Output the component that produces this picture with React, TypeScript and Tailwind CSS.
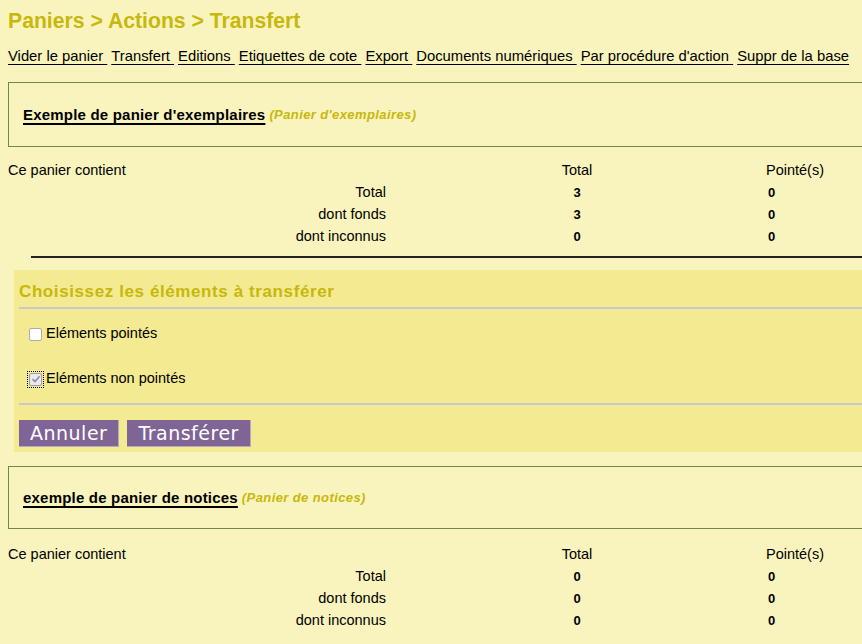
import React from 'react';

interface Row {
  label: string;
  total: number;
  pointes: number;
}

interface BasketProps {
  name: string;
  kind: string;
  rows: Row[];
  boxHeight: string;
  gap: string;
}

const links = [
  'Vider le panier',
  'Transfert',
  'Editions',
  'Etiquettes de cote',
  'Export',
  'Documents numériques',
  "Par procédure d'action",
  'Suppr de la base',
];

const BasketHeader: React.FC<{ name: string; kind: string; boxHeight: string }> = ({ name, kind, boxHeight }) => (
  <div className={`ml-2 ${boxHeight} border border-[#6f8a43] flex items-center pl-[14px] pt-[1px]`}>
    <span className="font-bold text-[15px] text-black tracking-[0.2px] underline decoration-2 underline-offset-[3px]">{name}</span>
    <span className="ml-[4px] font-bold italic text-[13px] text-[#c8b70c] tracking-[0.4px]">{kind}</span>
  </div>
);

const BasketTable: React.FC<{ rows: Row[] }> = ({ rows }) => (
  <div className="ml-2 grid grid-cols-[378px_382px_auto] text-[14.5px] text-black">
    <div className="h-[23px] flex items-center">Ce panier contient</div>
    <div className="h-[23px] flex items-center justify-center">Total</div>
    <div className="h-[23px] flex items-center -ml-[2px]">Pointé(s)</div>
    {rows.map((r) => (
      <React.Fragment key={r.label}>
        <div className="h-[22px] flex items-center justify-end">{r.label}</div>
        <div className="h-[22px] flex items-center justify-center font-bold text-[13px]">{r.total}</div>
        <div className="h-[22px] flex items-center font-bold text-[13px]">{r.pointes}</div>
      </React.Fragment>
    ))}
  </div>
);

const Basket: React.FC<BasketProps> = ({ name, kind, rows, boxHeight, gap }) => (
  <div>
    <BasketHeader name={name} kind={kind} boxHeight={boxHeight} />
    <div className={gap}>
      <BasketTable rows={rows} />
    </div>
  </div>
);

const CheckBox: React.FC<{ checked?: boolean }> = ({ checked }) =>
  checked ? (
    <span className="inline-flex items-center justify-center w-[17px] h-[17px] border border-dotted border-black">
      <span className="flex items-center justify-center w-[13px] h-[13px] bg-[#e9e9ee] border border-[#9aa0aa] rounded-[2px]">
        <svg width="10" height="10" viewBox="0 0 10 10">
          <path d="M1.5 5.2 L4 7.6 L8.6 2.2" fill="none" stroke="#8890a0" strokeWidth="1.6" />
        </svg>
      </span>
    </span>
  ) : (
    <span className="inline-block w-[13px] h-[13px] bg-white border border-[#a9adb5] rounded-[2px]" />
  );

export default function App() {
  const rows1: Row[] = [
    { label: 'Total', total: 3, pointes: 0 },
    { label: 'dont fonds', total: 3, pointes: 0 },
    { label: 'dont inconnus', total: 0, pointes: 0 },
  ];
  const rows2: Row[] = [
    { label: 'Total', total: 0, pointes: 0 },
    { label: 'dont fonds', total: 0, pointes: 0 },
    { label: 'dont inconnus', total: 0, pointes: 0 },
  ];

  return (
    <div className="w-[862px] h-[644px] overflow-hidden bg-[#f9f4bd]" style={{ fontFamily: '"Liberation Sans", Arial, sans-serif' }}>
      <div className="w-[1000px]">
        <h1 className="ml-2 pt-[9px] h-[34px] text-[21.2px] leading-[24px] font-bold text-[#c8b70c]">
          Paniers &gt; Actions &gt; Transfert
        </h1>
        <div className="ml-2 mt-[12px] h-[23px] flex text-[14.8px] text-black leading-[20px]">
          {links.map((l, i) => (
            <a key={l} href="#" className="underline underline-offset-[3px] decoration-1 whitespace-pre mr-[4px]">
              {i === links.length - 1 ? l : l + ' '}
            </a>
          ))}
        </div>
        <div className="mt-[13px]">
          <Basket
            name="Exemple de panier d'exemplaires"
            kind="(Panier d'exemplaires)"
            rows={rows1}
            boxHeight="h-[65px]"
            gap="mt-[12px]"
          />
        </div>

        <div className="ml-[31px] mt-[8px] h-[2px] bg-[#222]" />

        <div className="ml-[14px] mt-[12px] h-[182px] bg-[#f3ea91] pl-[5px] pt-[12px]">
          <h2 className="text-[17px] leading-[20px] font-bold text-[#c8b70c] tracking-[0.6px]">
            Choisissez les éléments à transférer
          </h2>
          <div className="mt-[5px] h-[2px] bg-[#c9c9cb]" />
          <div className="pl-[10px] pt-[16px] text-[14.5px] text-black">
            <label className="flex items-center h-[18px] gap-[4px]">
              <CheckBox />
              <span>Eléments pointés</span>
            </label>
            <label className="flex items-center h-[18px] mt-[27px] -ml-[2px] gap-[2px]">
              <CheckBox checked />
              <span>Eléments non pointés</span>
            </label>
          </div>
          <div className="mt-[15px] h-[2px] bg-[#c9c9cb]" />
          <div className="mt-[15px] flex gap-[8px]">
            {['Annuler', 'Transférer'].map((b) => (
              <button
                key={b}
                className="h-[27px] px-[11px] bg-[#7f6496] text-white text-[19px] leading-[24px] tracking-[0.5px] border-b border-r border-[#b7a9c4]"
                style={{ fontFamily: '"DejaVu Sans", sans-serif' }}
              >
                {b}
              </button>
            ))}
          </div>
        </div>

        <div className="mt-[14px]">
          <Basket
            name="exemple de panier de notices"
            kind="(Panier de notices)"
            rows={rows2}
            boxHeight="h-[63px]"
            gap="mt-[14px]"
          />
        </div>
      </div>
    </div>
  );
}
